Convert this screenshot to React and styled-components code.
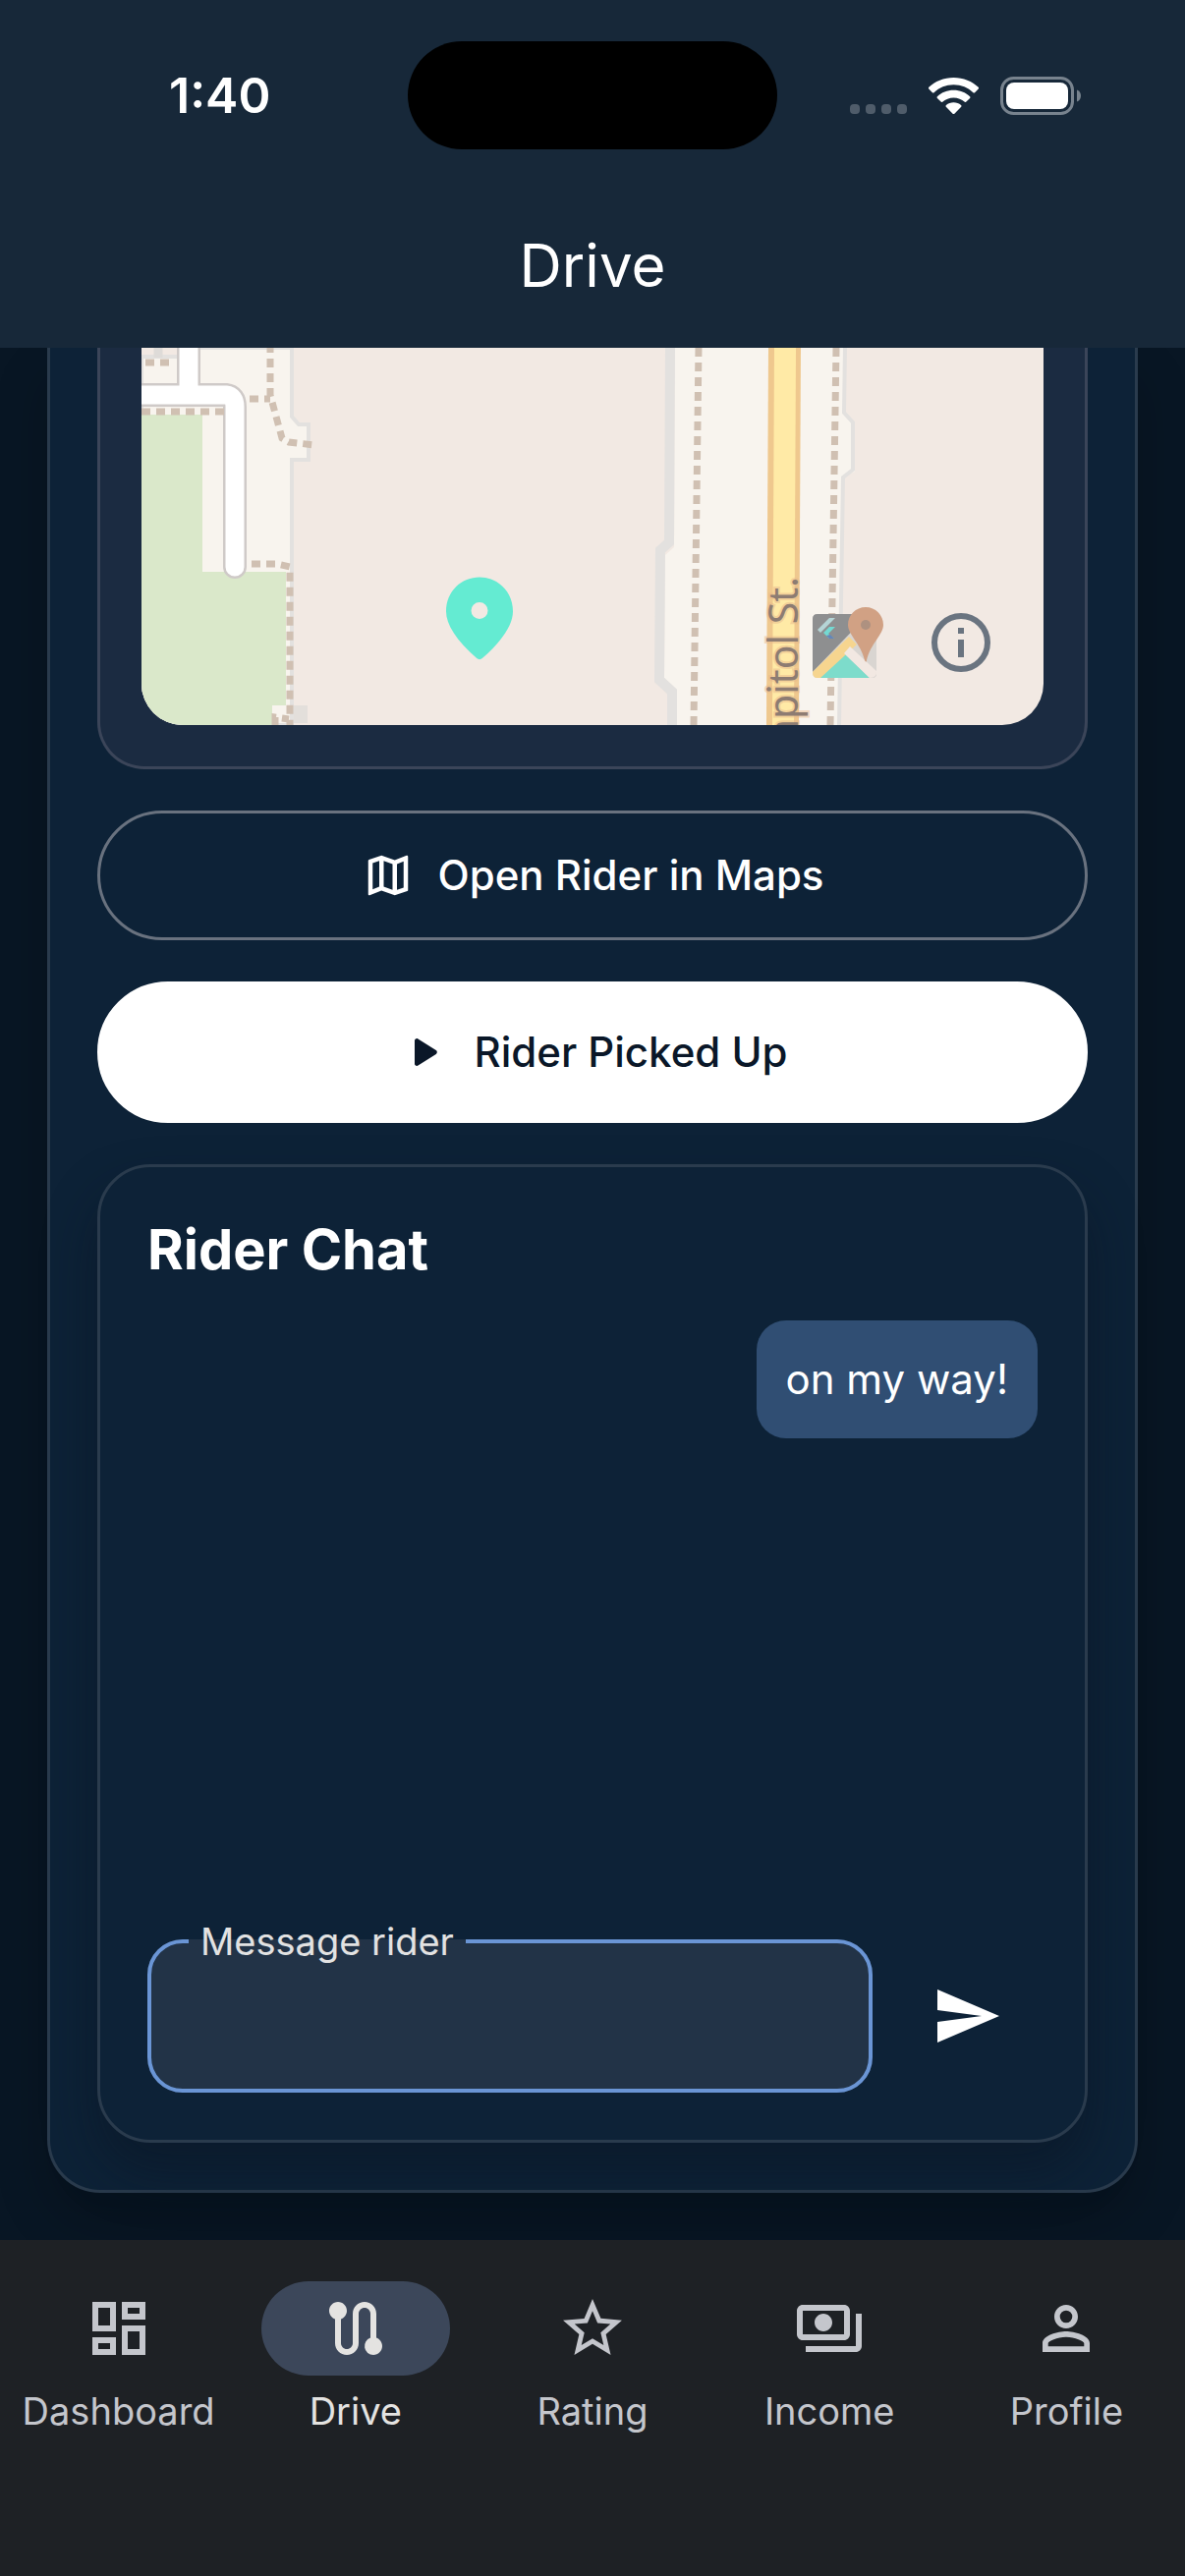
import React, { useState } from 'react';
import styled, { createGlobalStyle, css } from 'styled-components';
import {
  MdOutlineDashboard,
  MdOutlineMap,
  MdOutlinePayments,
  MdPersonOutline,
  MdRoute,
  MdSend,
  MdStarOutline,
} from 'react-icons/md';

const GlobalStyle = createGlobalStyle`
  * {
    box-sizing: border-box;
  }
  body {
    margin: 0;
    background: #081624;
    color: #fff;
    font-family: Inter, Roboto, sans-serif;
  }
  button, input {
    font-family: inherit;
  }
`;

const Screen = styled.div`
  display: flex;
  flex-direction: column;
  min-height: 100vh;
`;

const Header = styled.header`
  position: relative;
  z-index: 1;
  display: flex;
  flex-direction: column;
  gap: 34px;
  padding-top: 42px;
  background: #172839;
`;

const StatusBar = styled.div`
  display: grid;
  grid-template-columns: 1fr 376px 1fr;
  align-items: center;
  height: 110px;
`;

const Time = styled.span`
  padding-left: 172px;
  font-size: 50px;
  font-weight: 600;
  line-height: 60px;
`;

const Island = styled.div`
  height: 110px;
  border-radius: 55px;
  background: #000;
`;

const StatusIcons = styled.div`
  display: flex;
  justify-content: flex-end;
  padding-right: 106px;
`;

const Title = styled.h1`
  margin: 0;
  font-size: 60px;
  font-weight: 400;
  line-height: 168px;
  text-align: center;
`;

const Content = styled.main`
  flex: 1;
  padding: 0 48px 48px;
`;

const Panel = styled.section`
  display: flex;
  flex-direction: column;
  gap: 42px;
  padding: 0 48px 48px;
  border: 3px solid #2a3b4d;
  border-top: none;
  border-radius: 0 0 54px 54px;
  background: #0d2237;
  box-shadow: 0 30px 54px rgba(0, 0, 0, 0.2);
`;

const MapCard = styled.div`
  padding: 0 42px 42px;
  border: 3px solid #3b4559;
  border-top: none;
  border-radius: 0 0 48px 48px;
  background: #1b2b41;
`;

const MapFrame = styled.div`
  height: 384px;
  overflow: hidden;
  border-radius: 0 0 42px 42px;

  svg {
    display: block;
    width: 100%;
    height: 100%;
  }
`;

const ActionButton = styled.button`
  display: flex;
  align-items: center;
  justify-content: center;
  gap: 24px;
  height: ${props => props.$primary ? '144px' : '132px'};
  border: 3px solid #69727f;
  border-radius: 72px;
  background: transparent;
  color: #fff;
  font-size: 42px;
  font-weight: 500;
  line-height: 60px;
  cursor: pointer;
  ${props => props.$primary && css`
    border-color: #fff;
    background: #fff;
    color: #0a1728;
  `}

  svg {
    width: 54px;
    height: 54px;
  }
`;

const ChatCard = styled.section`
  display: flex;
  flex-direction: column;
  gap: 36px;
  padding: 48px;
  border: 3px solid #2a3b4d;
  border-radius: 54px;
  background: #0d2237;
  box-shadow: 0 30px 54px rgba(8, 18, 32, 0.45);
`;

const ChatTitle = styled.h2`
  margin: 0;
  font-size: 56px;
  font-weight: 700;
  line-height: 72px;
`;

const MessageList = styled.div`
  display: flex;
  flex-direction: column;
  align-items: flex-end;
  min-height: 572px;
`;

const Bubble = styled.p`
  margin: 0;
  padding: 30px;
  border-radius: 30px;
  background: #304e73;
  font-size: 42px;
  line-height: 60px;
`;

const MessageForm = styled.form`
  display: flex;
  align-items: flex-end;
  gap: 24px;
`;

const MessageField = styled.fieldset`
  flex: 1;
  min-width: 0;
  margin: 0;
  padding: 0 38px;
  border: 4px solid #6a95d5;
  border-radius: 36px;
  background: #223347;
`;

const MessageLabel = styled.legend`
  padding: 0 12px;
  color: #e2e2e2;
  font-size: 38px;
  line-height: 48px;
`;

const MessageInput = styled.input`
  display: block;
  width: 100%;
  height: 126px;
  border: none;
  outline: none;
  background: transparent;
  color: #fff;
  font-size: 42px;
`;

const SendButton = styled.button`
  display: grid;
  place-items: center;
  width: 144px;
  height: 156px;
  padding: 0;
  border: none;
  background: transparent;
  color: #fff;
  cursor: pointer;

  svg {
    width: 72px;
    height: 72px;
  }
`;

const NavBar = styled.nav`
  position: relative;
  display: grid;
  grid-template-columns: repeat(5, 1fr);
  padding: 42px 0 144px;
  background: #1e2125;
`;

const NavItem = styled.a`
  display: flex;
  flex-direction: column;
  align-items: center;
  gap: 12px;
  color: ${props => props.$active ? '#e4e3e1' : '#c4c6cc'};
  font-size: 38px;
  font-weight: 400;
  line-height: 48px;
  text-decoration: none;
`;

const NavIcon = styled.span`
  display: grid;
  place-items: center;
  width: 192px;
  height: 96px;
  border-radius: 48px;
  background: ${props => props.$active ? '#3c475a' : 'transparent'};

  svg {
    width: 72px;
    height: 72px;
  }
`;

const navItems = [
  { label: 'Dashboard', Icon: MdOutlineDashboard },
  { label: 'Drive', Icon: MdRoute },
  { label: 'Rating', Icon: MdStarOutline },
  { label: 'Income', Icon: MdOutlinePayments },
  { label: 'Profile', Icon: MdPersonOutline },
];

const PhoneStatus = () => (
  <svg width="236" height="40" viewBox="0 -1 236 40" aria-hidden="true">
    <g fill="#4f5c6a">
      <rect x="1" y="28" width="10" height="10" rx="4" />
      <rect x="17" y="28" width="10" height="10" rx="4" />
      <rect x="33" y="28" width="10" height="10" rx="4" />
      <rect x="49" y="28" width="10" height="10" rx="4" />
    </g>
    <g fill="#fff">
      <path d="M106.500 1C96.500 1 87.500 4.800 81.300 10.800c-.5.500-.5 1.200 0 1.700l3.600 3.700c.5.500 1.200.5 1.700 0 5.200-4.900 12.200-7.900 19.900-7.900s14.700 3 19.900 7.900c.5.500 1.200.5 1.700 0l3.600-3.700c.5-.5.5-1.200 0-1.700C125.500 4.800 116.500 1 106.500 1z" />
      <path d="M106.500 13.800c-6.400 0-12.200 2.400-16.600 6.400-.5.500-.5 1.200 0 1.700l3.700 3.700c.4.500 1.100.5 1.600.1 3-2.700 7-4.300 11.300-4.300s8.300 1.600 11.300 4.300c.5.400 1.200.4 1.600-.1l3.700-3.700c.5-.5.5-1.200 0-1.700-4.400-4-10.200-6.400-16.600-6.400z" />
      <path d="M106.500 26.300c-2.900 0-5.500 1-7.600 2.700-.5.500-.5 1.200-.1 1.700l6.800 7c.5.500 1.300.5 1.800 0l6.800-7c.4-.5.4-1.200-.1-1.700-2.100-1.700-4.700-2.700-7.600-2.700z" />
      <rect x="160" y="6" width="63" height="27" rx="8" />
    </g>
    <rect x="155.500" y="1.500" width="72" height="36" rx="12" fill="none" stroke="#78838e" strokeWidth="3" />
    <path d="M232 13.500c3 1.200 4 3.600 4 6s-1 4.800-4 6z" fill="#78838e" />
  </svg>
);

const PlayIcon = () => (
  <svg viewBox="0 0 24 24" fill="currentColor" aria-hidden="true">
    <path d="M8 6.820v10.360c0 .79.87 1.270 1.540.84l8.140-5.180c.62-.39.62-1.290 0-1.690L9.540 5.980C8.870 5.550 8 6.030 8 6.820z" />
  </svg>
);

const RiderMap = () => (
  <svg viewBox="0 0 918 384" preserveAspectRatio="xMidYMid slice" role="img" aria-label="Rider map">
    <rect width="918" height="384" fill="#f2e9e3" />

    {/* ground beside the buildings */}
    <path d="M0 9H39V0H153V70L160 78H170V114H153V384H0z" fill="#f8f4ee" stroke="#e3e1df" strokeWidth="4" />
    <path d="M17 0V10" stroke="#dedbd8" strokeWidth="9" />
    <path d="M543 0 542 203 533 211 532 336 545 348 545 384H709L713 132 726 126V76L716 66V0z" fill="#f8f4ee" />
    <path d="M538 0 537 198 528 206 527 338 540 350V384" fill="none" stroke="#e3e1df" strokeWidth="10" />
    <path d="M716 0 715 66 724 76V124L714 132 710 384" fill="none" stroke="#e3e1df" strokeWidth="4" />

    {/* park */}
    <path d="M0 68H62V228H147V364H133V384H0z" fill="#dae8ca" />
    <path d="M155 364h14v18h-14z" fill="#e3dfdb" />

    {/* service road */}
    <g fill="none" strokeLinejoin="round">
      <path d="M48 -4V48M-4 48H86Q95 49 95 60V223" stroke="#cfcac8" strokeWidth="24" strokeLinecap="round" />
      <path d="M48 -4V48M-4 48H86Q95 49 95 60V223" stroke="#fff" strokeWidth="19" strokeLinecap="round" />
    </g>

    {/* footpaths */}
    <g fill="none" stroke="#d0c0b2" strokeWidth="7" strokeDasharray="9 6">
      <path d="M4 15H32" />
      <path d="M0 65H85" />
      <path d="M131 -4V48L143 92 150 96 176 99" />
      <path d="M110 52H131" />
      <path d="M112 220H138L151 223V384" />
      <path d="M136 384V376L150 378" />
      <path d="M567 0 562 384" />
      <path d="M707 0 701 384" />
    </g>

    {/* main street */}
    <path d="M638 0H671L669 384H636z" fill="#efc88e" />
    <path d="M644 0H666L664 384H642z" fill="#ffeaa6" />
    <text
      transform="translate(668 233) rotate(-90)"
      textAnchor="end"
      fontFamily="Noto Sans, sans-serif"
      fontSize="41"
      fill="#8d7c72"
      stroke="#e8b98c"
      strokeWidth="4"
      strokeOpacity="0.5"
      paintOrder="stroke"
    >
      apitol St.
    </text>

    {/* rider pin, 102px over a 24 unit grid */}
    <g transform="translate(293 225) scale(4.250)">
      <path
        fill="#64ebd2"
        fillRule="evenodd"
        d="M12 2C7.800 2 4 5.220 4 10.200c0 3.180 2.450 6.920 7.340 11.230.38.33.95.33 1.330 0C17.550 17.120 20 13.380 20 10.200 20 5.220 16.200 2 12 2zm0 10a2 2 0 1 1 0-4 2 2 0 0 1 0 4z"
      />
    </g>

    {/* map library mark */}
    <g>
      <path d="M688 271H744Q748 271 748 275V332Q748 336 744 336H688Q683 336 683 331V276Q683 271 688 271z" fill="#d9d5d1" />
      <path d="M688 271H740L683 330V276Q683 271 688 271z" fill="#8e8f90" />
      <path d="M702 325 715 311 741 336H690z" fill="#7ddccb" />
      <path d="M720 294 728 302 691 336H688Q683 336 683 330z" fill="#f6d58f" />
      <path d="M721 304 748 329Q749 336 741 336L715 311z" fill="#f2e8e2" />
      <path d="M688 287 700 275H706L691 290z" fill="#b5d5d6" />
      <path d="M694 290 700 284H706L699 291 705 296H700z" fill="#74d9d2" />
      <path d="M697 293 700 296H705L701 292z" fill="#6586b8" />
      <path d="M737 264C727 264 719 272 719 282 719 292 732 301 736 318 737 320 738 320 738 318 742 301 755 292 755 282 755 272 747 264 737 264z" fill="#d1a184" />
      <circle cx="737" cy="282" r="5" fill="#ae9180" />
    </g>

    {/* attribution info */}
    <g transform="translate(834 300)">
      <circle r="27" fill="none" stroke="#6a7480" strokeWidth="6" />
      <path d="M-3 -15H3V-9H-3zM-3 -3H3V15H-3z" fill="#6a7480" />
    </g>
  </svg>
);

const App = () => {
  const [message, setMessage] = useState('');

  return (
    <Screen>
      <GlobalStyle />
      <Header>
        <StatusBar>
          <Time>1:40</Time>
          <Island />
          <StatusIcons>
            <PhoneStatus />
          </StatusIcons>
        </StatusBar>
        <Title>Drive</Title>
      </Header>

      <Content>
        <Panel>
          <MapCard>
            <MapFrame>
              <RiderMap />
            </MapFrame>
          </MapCard>
          <ActionButton type="button">
            <MdOutlineMap />
            Open Rider in Maps
          </ActionButton>
          <ActionButton type="button" $primary>
            <PlayIcon />
            Rider Picked Up
          </ActionButton>

          <ChatCard>
            <ChatTitle>Rider Chat</ChatTitle>
            <MessageList>
              <Bubble>on my way!</Bubble>
            </MessageList>
            <MessageForm onSubmit={e => e.preventDefault()}>
              <MessageField>
                <MessageLabel>
                  <label htmlFor="message">Message rider</label>
                </MessageLabel>
                <MessageInput
                  id="message"
                  value={message}
                  onChange={e => setMessage(e.target.value)}
                />
              </MessageField>
              <SendButton type="submit" aria-label="Send">
                <MdSend />
              </SendButton>
            </MessageForm>
          </ChatCard>
        </Panel>
      </Content>

      <NavBar>
        {navItems.map(({ label, Icon }) => (
          <NavItem href="#" key={label} $active={label === 'Drive'}>
            <NavIcon $active={label === 'Drive'}>
              <Icon />
            </NavIcon>
            {label}
          </NavItem>
        ))}
      </NavBar>
    </Screen>
  );
};

export default App;
